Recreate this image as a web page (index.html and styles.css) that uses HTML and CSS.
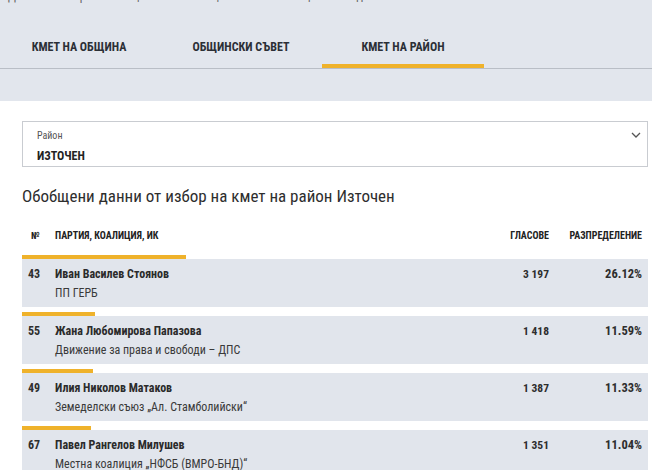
FILE: index.html
```html
<!DOCTYPE html>
<html lang="bg">
<head>
    <meta charset="UTF-8">
    <meta name="viewport" content="width=device-width, initial-scale=1.0">
    <title>Местни избори - Пловдив</title>
    <link rel="stylesheet" href="styles.css">
</head>
<body>

<div class="top">
    <p class="crumb">Данни от изборите за общински съветници и кметове в община Пловдив</p>

    <!-- Tabs -->
    <div class="tabs">
        <div class="tab">КМЕТ НА ОБЩИНА</div>
        <div class="tab">ОБЩИНСКИ СЪВЕТ</div>
        <div class="tab active">КМЕТ НА РАЙОН</div>
    </div>
</div>

<div class="main">
    <!-- District select -->
    <div class="select-box">
        <div>
            <div class="select-label">Район</div>
            <div class="select-value">ИЗТОЧЕН</div>
        </div>
        <svg class="chevron" width="10" height="6" viewBox="0 0 10 6">
            <path d="M1 1 L5 5 L9 1" fill="none" stroke="#555" stroke-width="1.3"/>
        </svg>
    </div>

    <h2 class="title">Обобщени данни от избор на кмет на район Източен</h2>

    <!-- Results -->
    <div class="row head">
        <span class="num">№</span>
        <span>ПАРТИЯ, КОАЛИЦИЯ, ИК</span>
        <span class="right">ГЛАСОВЕ</span>
        <span class="right">РАЗПРЕДЕЛЕНИЕ</span>
    </div>

    <div id="results"></div>
</div>

<script>
    const results = [
        { num: 43, name: 'Иван Василев Стоянов', party: 'ПП ГЕРБ', votes: '3 197', pct: 26.12 },
        { num: 55, name: 'Жана Любомирова Папазова', party: 'Движение за права и свободи – ДПС', votes: '1 418', pct: 11.59 },
        { num: 49, name: 'Илия Николов Матаков', party: 'Земеделски съюз „Ал. Стамболийски“', votes: '1 387', pct: 11.33 },
        { num: 67, name: 'Павел Рангелов Милушев', party: 'Местна коалиция „НФСБ (ВМРО-БНД)“', votes: '1 351', pct: 11.04 }
    ];

    const list = document.getElementById('results');
    results.forEach(item => {
        const el = document.createElement('div');
        el.className = 'result';
        el.innerHTML = `
            <div class="bar" style="width: ${item.pct}%"></div>
            <div class="row item">
                <span class="num">${item.num}</span>
                <div>
                    <div class="name">${item.name}</div>
                    <div class="party">${item.party}</div>
                </div>
                <span class="right votes">${item.votes}</span>
                <span class="right pct">${item.pct.toFixed(2)}%</span>
            </div>
        `;
        list.appendChild(el);
    });
</script>

</body>
</html>
```

FILE: styles.css
```css
body {
    margin: 0;
    font-family: "Roboto Condensed", "Liberation Sans Narrow", "DejaVu Sans Condensed", Roboto, sans-serif;
    font-stretch: condensed;
    color: #2e2e2e;
    background: #fff;
    overflow: hidden;
}
.top {
    background: #e2e6ed;
    padding-bottom: 32px;
}
.crumb {
    margin: -11px 0 0 8px;
    height: 14px;
    font-size: 12px;
    line-height: 14px;
    color: #666;
}
.tabs {
    display: flex;
    margin-top: 27px;
    margin-left: -2px;
    border-bottom: 1px solid #b9bec6;
}
.tab {
    width: 162px;
    text-align: center;
    font-size: 12px;
    font-weight: bold;
    line-height: 14px;
    padding: 10px 0 14px;
    color: #2b2f36;
}
.tab.active {
    padding-bottom: 10px;
    border-bottom: 4px solid #efb22b;
}
.main {
    padding: 20px 4px 0 22px;
}
.select-box {
    display: flex;
    justify-content: space-between;
    align-items: flex-start;
    height: 44px;
    padding: 0 6px 0 14px;
    border: 1px solid #c9ccd1;
}
.select-label {
    margin-top: 8px;
    font-size: 10px;
    line-height: 12px;
    color: #555;
}
.select-value {
    margin-top: 7px;
    font-size: 12px;
    font-weight: bold;
    line-height: 14px;
    color: #222;
}
.chevron {
    margin-top: 10px;
}
.title {
    margin: 18px 0 0;
    font-size: 17px;
    font-weight: normal;
    line-height: 22px;
    color: #2e2e2e;
}
.row {
    display: grid;
    grid-template-columns: 27px 1fr 80px 93px;
    align-items: start;
    padding: 0 6px;
}
.row.head {
    margin-top: 23px;
    padding-bottom: 13px;
    font-size: 10px;
    font-weight: bold;
    line-height: 12px;
    color: #222;
}
.row.head .num {
    padding-left: 3px;
}
.right {
    text-align: right;
}
.result {
    margin-bottom: 5px;
}
.bar {
    height: 4px;
    background: #efb22b;
}
.row.item {
    background: #e1e5ec;
    padding-top: 7px;
    padding-bottom: 6px;
    height: 35px;
    font-size: 12px;
    line-height: 16px;
}
.num {
    font-weight: bold;
}
.name {
    font-weight: bold;
    color: #2b2b2b;
}
.party {
    margin-top: 3px;
    color: #3a3a3a;
}
.votes {
    font-size: 11.5px;
    font-weight: bold;
}
.pct {
    font-size: 12.5px;
    font-weight: bold;
}
```
